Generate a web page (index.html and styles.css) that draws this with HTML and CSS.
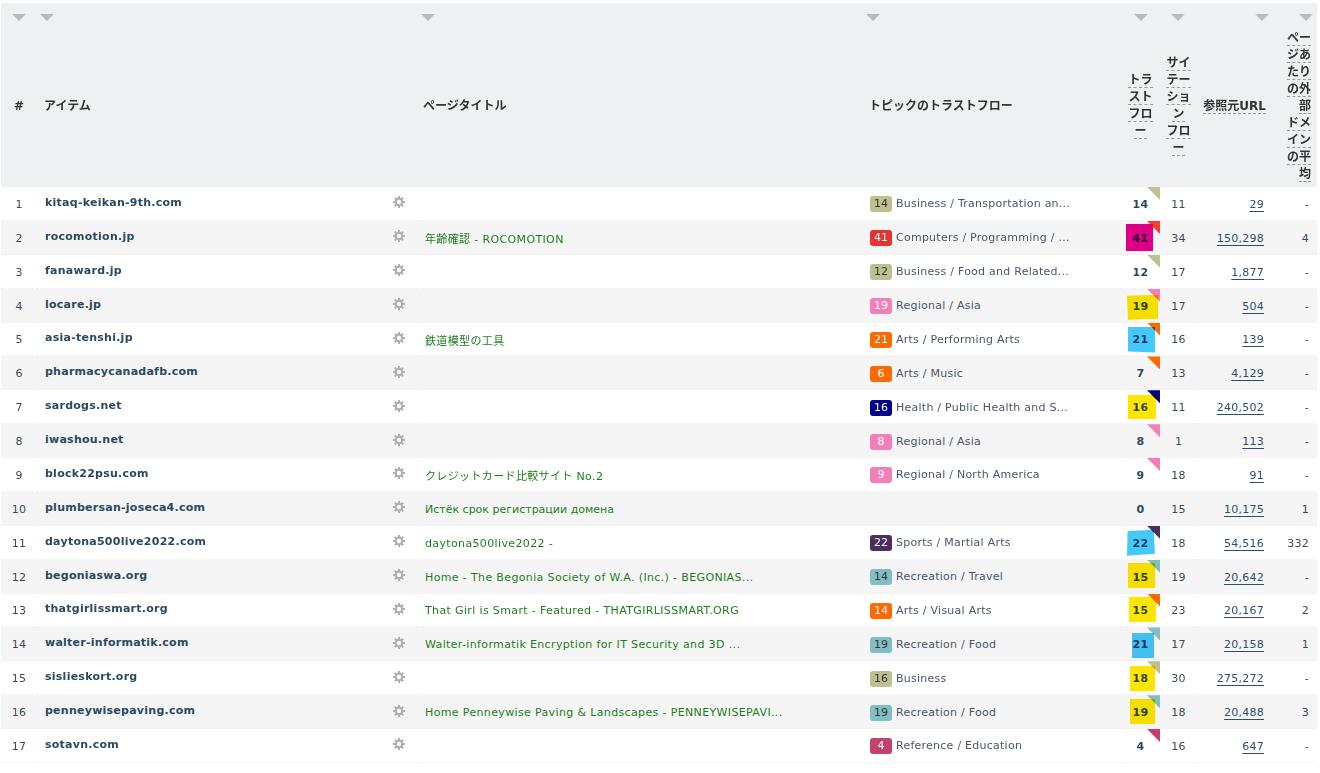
FILE: index.html
```html
<!DOCTYPE html>
<html lang="ja">
<head>
    <meta charset="UTF-8">
    <meta name="viewport" content="width=device-width, initial-scale=1.0">
    <link rel="stylesheet" href="styles.css">
</head>
<body>
    <svg class="defs" width="0" height="0">
        <symbol id="gear" viewBox="0 0 12 12">
            <circle cx="6" cy="6" r="3.3" fill="none" stroke="currentColor" stroke-width="2.2"/>
            <path d="M6 0V3M6 9V12M0 6H3M9 6H12M1.8 1.8L3.6 3.6M8.4 8.4L10.2 10.2M10.2 1.8L8.4 3.6M3.6 8.4L1.8 10.2" stroke="currentColor" stroke-width="2"/>
        </symbol>
    </svg>
    <table class="results">
        <thead>
            <tr>
                <th class="col-num"><i class="sort"></i>#</th>
                <th class="col-item"><i class="sort"></i>アイテム</th>
                <th class="col-title"><i class="sort"></i>ページタイトル</th>
                <th class="col-topic"><i class="sort"></i>トピックのトラストフロー</th>
                <th class="col-tf"><i class="sort"></i><span class="hint">トラ<br>スト<br>フロ<br>ー</span></th>
                <th class="col-cf"><i class="sort"></i><span class="hint">サイ<br>テー<br>ショ<br>ン<br>フロ<br>ー</span></th>
                <th class="col-url"><i class="sort"></i><span class="hint">参照元URL</span></th>
                <th class="col-avg"><i class="sort"></i><span class="hint">ペー<br>ジあ<br>たり<br>の外<br>部<br>ドメ<br>イン<br>の平<br>均</span></th>
            </tr>
        </thead>
        <tbody>
            <tr class="t-business">
                <td class="col-num">1</td>
                <td class="col-item"><div class="item"><a>kitaq-keikan-9th.com</a><svg class="gear"><use href="#gear"/></svg></div></td>
                <td class="col-title"></td>
                <td class="col-topic"><b class="badge">14</b>Business / Transportation an...</td>
                <td class="col-tf"><i class="corner"></i>14</td>
                <td class="col-cf">11</td>
                <td class="col-url"><a>29</a></td>
                <td class="col-avg">-</td>
            </tr>
            <tr class="t-computers">
                <td class="col-num">2</td>
                <td class="col-item"><div class="item"><a>rocomotion.jp</a><svg class="gear"><use href="#gear"/></svg></div></td>
                <td class="col-title">年齢確認 - ROCOMOTION</td>
                <td class="col-topic"><b class="badge">41</b>Computers / Programming / ...</td>
                <td class="col-tf"><i class="corner"></i>41<i class="box pink r2"></i></td>
                <td class="col-cf">34</td>
                <td class="col-url"><a>150,298</a></td>
                <td class="col-avg">4</td>
            </tr>
            <tr class="t-business">
                <td class="col-num">3</td>
                <td class="col-item"><div class="item"><a>fanaward.jp</a><svg class="gear"><use href="#gear"/></svg></div></td>
                <td class="col-title"></td>
                <td class="col-topic"><b class="badge">12</b>Business / Food and Related...</td>
                <td class="col-tf"><i class="corner"></i>12</td>
                <td class="col-cf">17</td>
                <td class="col-url"><a>1,877</a></td>
                <td class="col-avg">-</td>
            </tr>
            <tr class="t-regional">
                <td class="col-num">4</td>
                <td class="col-item"><div class="item"><a>locare.jp</a><svg class="gear"><use href="#gear"/></svg></div></td>
                <td class="col-title"></td>
                <td class="col-topic"><b class="badge">19</b>Regional / Asia</td>
                <td class="col-tf"><i class="corner"></i>19<i class="box yellow r4"></i></td>
                <td class="col-cf">17</td>
                <td class="col-url"><a>504</a></td>
                <td class="col-avg">-</td>
            </tr>
            <tr class="t-arts">
                <td class="col-num">5</td>
                <td class="col-item"><div class="item"><a>asia-tenshi.jp</a><svg class="gear"><use href="#gear"/></svg></div></td>
                <td class="col-title">鉄道模型の工具</td>
                <td class="col-topic"><b class="badge">21</b>Arts / Performing Arts</td>
                <td class="col-tf"><i class="corner"></i>21<i class="box blue r5"></i></td>
                <td class="col-cf">16</td>
                <td class="col-url"><a>139</a></td>
                <td class="col-avg">-</td>
            </tr>
            <tr class="t-arts">
                <td class="col-num">6</td>
                <td class="col-item"><div class="item"><a>pharmacycanadafb.com</a><svg class="gear"><use href="#gear"/></svg></div></td>
                <td class="col-title"></td>
                <td class="col-topic"><b class="badge">6</b>Arts / Music</td>
                <td class="col-tf"><i class="corner"></i>7</td>
                <td class="col-cf">13</td>
                <td class="col-url"><a>4,129</a></td>
                <td class="col-avg">-</td>
            </tr>
            <tr class="t-health">
                <td class="col-num">7</td>
                <td class="col-item"><div class="item"><a>sardogs.net</a><svg class="gear"><use href="#gear"/></svg></div></td>
                <td class="col-title"></td>
                <td class="col-topic"><b class="badge">16</b>Health / Public Health and S...</td>
                <td class="col-tf"><i class="corner"></i>16<i class="box yellow r7"></i></td>
                <td class="col-cf">11</td>
                <td class="col-url"><a>240,502</a></td>
                <td class="col-avg">-</td>
            </tr>
            <tr class="t-regional">
                <td class="col-num">8</td>
                <td class="col-item"><div class="item"><a>iwashou.net</a><svg class="gear"><use href="#gear"/></svg></div></td>
                <td class="col-title"></td>
                <td class="col-topic"><b class="badge">8</b>Regional / Asia</td>
                <td class="col-tf"><i class="corner"></i>8</td>
                <td class="col-cf">1</td>
                <td class="col-url"><a>113</a></td>
                <td class="col-avg">-</td>
            </tr>
            <tr class="t-regional">
                <td class="col-num">9</td>
                <td class="col-item"><div class="item"><a>block22psu.com</a><svg class="gear"><use href="#gear"/></svg></div></td>
                <td class="col-title">クレジットカード比較サイト No.2</td>
                <td class="col-topic"><b class="badge">9</b>Regional / North America</td>
                <td class="col-tf"><i class="corner"></i>9</td>
                <td class="col-cf">18</td>
                <td class="col-url"><a>91</a></td>
                <td class="col-avg">-</td>
            </tr>
            <tr>
                <td class="col-num">10</td>
                <td class="col-item"><div class="item"><a>plumbersan-joseca4.com</a><svg class="gear"><use href="#gear"/></svg></div></td>
                <td class="col-title cyrillic">Истёк срок регистрации домена</td>
                <td class="col-topic"></td>
                <td class="col-tf">0</td>
                <td class="col-cf">15</td>
                <td class="col-url"><a>10,175</a></td>
                <td class="col-avg">1</td>
            </tr>
            <tr class="t-sports">
                <td class="col-num">11</td>
                <td class="col-item"><div class="item"><a>daytona500live2022.com</a><svg class="gear"><use href="#gear"/></svg></div></td>
                <td class="col-title">daytona500live2022 -</td>
                <td class="col-topic"><b class="badge">22</b>Sports / Martial Arts</td>
                <td class="col-tf"><i class="corner"></i>22<i class="box blue r11"></i></td>
                <td class="col-cf">18</td>
                <td class="col-url"><a>54,516</a></td>
                <td class="col-avg">332</td>
            </tr>
            <tr class="t-recreation">
                <td class="col-num">12</td>
                <td class="col-item"><div class="item"><a>begoniaswa.org</a><svg class="gear"><use href="#gear"/></svg></div></td>
                <td class="col-title">Home - The Begonia Society of W.A. (Inc.) - BEGONIAS...</td>
                <td class="col-topic"><b class="badge">14</b>Recreation / Travel</td>
                <td class="col-tf"><i class="corner"></i>15<i class="box yellow r12"></i></td>
                <td class="col-cf">19</td>
                <td class="col-url"><a>20,642</a></td>
                <td class="col-avg">-</td>
            </tr>
            <tr class="t-arts">
                <td class="col-num">13</td>
                <td class="col-item"><div class="item"><a>thatgirlissmart.org</a><svg class="gear"><use href="#gear"/></svg></div></td>
                <td class="col-title">That Girl is Smart - Featured - THATGIRLISSMART.ORG</td>
                <td class="col-topic"><b class="badge">14</b>Arts / Visual Arts</td>
                <td class="col-tf"><i class="corner"></i>15<i class="box yellow r13"></i></td>
                <td class="col-cf">23</td>
                <td class="col-url"><a>20,167</a></td>
                <td class="col-avg">2</td>
            </tr>
            <tr class="t-recreation">
                <td class="col-num">14</td>
                <td class="col-item"><div class="item"><a>walter-informatik.com</a><svg class="gear"><use href="#gear"/></svg></div></td>
                <td class="col-title">Walter-informatik Encryption for IT Security and 3D ...</td>
                <td class="col-topic"><b class="badge">19</b>Recreation / Food</td>
                <td class="col-tf"><i class="corner"></i>21<i class="box blue r14"></i></td>
                <td class="col-cf">17</td>
                <td class="col-url"><a>20,158</a></td>
                <td class="col-avg">1</td>
            </tr>
            <tr class="t-business">
                <td class="col-num">15</td>
                <td class="col-item"><div class="item"><a>sislieskort.org</a><svg class="gear"><use href="#gear"/></svg></div></td>
                <td class="col-title"></td>
                <td class="col-topic"><b class="badge">16</b>Business</td>
                <td class="col-tf"><i class="corner"></i>18<i class="box yellow r15"></i></td>
                <td class="col-cf">30</td>
                <td class="col-url"><a>275,272</a></td>
                <td class="col-avg">-</td>
            </tr>
            <tr class="t-recreation">
                <td class="col-num">16</td>
                <td class="col-item"><div class="item"><a>penneywisepaving.com</a><svg class="gear"><use href="#gear"/></svg></div></td>
                <td class="col-title">Home Penneywise Paving &amp; Landscapes - PENNEYWISEPAVI...</td>
                <td class="col-topic"><b class="badge">19</b>Recreation / Food</td>
                <td class="col-tf"><i class="corner"></i>19<i class="box yellow r16"></i></td>
                <td class="col-cf">18</td>
                <td class="col-url"><a>20,488</a></td>
                <td class="col-avg">3</td>
            </tr>
            <tr class="t-reference">
                <td class="col-num">17</td>
                <td class="col-item"><div class="item"><a>sotavn.com</a><svg class="gear"><use href="#gear"/></svg></div></td>
                <td class="col-title"></td>
                <td class="col-topic"><b class="badge">4</b>Reference / Education</td>
                <td class="col-tf"><i class="corner"></i>4</td>
                <td class="col-cf">16</td>
                <td class="col-url"><a>647</a></td>
                <td class="col-avg">-</td>
            </tr>
        </tbody>
    </table>
</body>
</html>
```

FILE: styles.css
```css
body {
    margin: 0;
    padding: 3px 0 0 1px;
    background: #fff;
    font-family: "DejaVu Sans", "Noto Sans CJK JP", sans-serif;
    font-size: 11px;
    letter-spacing: 0.25px;
    color: #333;
}
.defs {
    position: absolute;
}

.results {
    width: 1316px;
    table-layout: fixed;
    border-collapse: separate;
    border-spacing: 0;
}
.results th,
.results td {
    position: relative;
    box-sizing: border-box;
    padding: 0;
}

/* column widths */
.col-num { width: 36px; text-align: center; }
.col-item { width: 380px; }
.col-title { width: 445px; }
.col-topic { width: 259px; }
.col-tf { width: 39px; text-align: center; }
.col-cf { width: 37px; text-align: center; }
.col-url { width: 73px; text-align: right; }
.col-avg { width: 47px; text-align: right; }

/* header */
.results th {
    height: 184px;
    padding-top: 22px;
    background: #eff0f2;
    font-size: 12px;
    font-weight: bold;
    letter-spacing: 0;
    line-height: 17px;
    color: #333;
    text-align: left;
}
.results th:first-child { border-radius: 3px 0 0 3px; }
.results th.col-num { text-align: center; }
.results th.col-item { padding-left: 7px; }
.results th.col-title { padding-left: 6px; }
.results th.col-topic { padding-left: 7px; }
.results th.col-tf,
.results th.col-cf { text-align: center; }
.results th.col-url { text-align: right; padding-right: 4px; }
.results th.col-avg { text-align: right; padding-right: 6px; }

.hint {
    border-bottom: 1px dashed #999;
}
.sort {
    position: absolute;
    top: 11px;
    width: 14px;
    height: 7px;
    background: #bbb;
    clip-path: polygon(0 0, 100% 0, 50% 100%);
}
th.col-num .sort { left: 11px; }
th.col-item .sort { left: 3px; }
th.col-title .sort { left: 4px; }
th.col-topic .sort { left: 4px; }
th.col-tf .sort { left: 13px; }
th.col-cf .sort { left: 11px; }
th.col-url .sort { left: 58px; }
th.col-avg .sort { left: 29px; }

/* rows */
.results td {
    height: 33.88px;
    padding-top: 2px;
    border-bottom: 1px dotted #eee;
    color: #3d4a55;
}
tbody tr:nth-child(even) td {
    background: #f5f5f5;
}
td.col-url { padding-right: 6px; }
td.col-avg { padding-right: 8px; }
td.col-url a {
    color: #2d4f6c;
    text-decoration: underline;
    text-underline-offset: 3px;
}

.item {
    display: flex;
    align-items: center;
    justify-content: space-between;
    padding: 0 12px 4px 8px;
}
.item a {
    font-weight: bold;
    color: #2a4a62;
}
.gear {
    width: 12px;
    height: 12px;
    color: #b0b0b0;
}

td.col-title {
    padding-left: 8px;
    color: #1b7f1b;
    letter-spacing: 0.36px;
    white-space: nowrap;
}
td.cyrillic {
    letter-spacing: 0;
}
td.col-topic {
    padding-left: 8px;
    color: #46586a;
    white-space: nowrap;
}
td.col-tf {
    font-weight: bold;
    color: #2a4a62;
}

/* topic colours */
.t-business { --topic: #bfc08f; --topic-text: #333; }
.t-computers { --topic: #e53232; --topic-text: #fff; }
.t-regional { --topic: #f47fb8; --topic-text: #fff; }
.t-arts { --topic: #ff6a00; --topic-text: #fff; }
.t-health { --topic: #00008b; --topic-text: #fff; }
.t-sports { --topic: #4a2f5f; --topic-text: #fff; }
.t-recreation { --topic: #82bfc2; --topic-text: #333; }
.t-reference { --topic: #c2416f; --topic-text: #fff; }

.badge {
    display: inline-block;
    width: 22px;
    height: 16px;
    margin-right: 4px;
    border-radius: 3px;
    background: var(--topic);
    color: var(--topic-text);
    font-weight: normal;
    letter-spacing: 0;
    line-height: 16px;
    text-align: center;
}
.corner {
    position: absolute;
    top: 0;
    right: 0;
    width: 13px;
    height: 13px;
    background: var(--topic);
    clip-path: polygon(0 0, 100% 0, 100% 100%);
}
.t-computers .corner {
    background: #ff3b30;
}

/* highlighter marks, laid over the number */
.box {
    position: absolute;
    mix-blend-mode: multiply;
}
.yellow { background: #ffe600; }
.blue { background: #45c8fa; }
.pink { background: #e6008c; }
.r2 { left: 5px; top: 3px; width: 27px; height: 27px; }
.r4 { left: 6px; top: 6px; width: 31px; height: 25px; clip-path: polygon(0 4%, 100% 0, 100% 96%, 3% 100%); }
.r5 { left: 7px; top: 4px; width: 27px; height: 26px; clip-path: polygon(0 0, 100% 2%, 100% 100%, 0 96%); }
.r7 { left: 7px; top: 5px; width: 28px; height: 24px; }
.r11 { left: 6px; top: 4px; width: 28px; height: 26px; clip-path: polygon(2% 5%, 95% 0, 100% 92%, 0 100%); }
.r12 { left: 7px; top: 3px; width: 27px; height: 25px; }
.r13 { left: 8px; top: 3px; width: 27px; height: 25px; }
.r14 { left: 11px; top: 6px; width: 22px; height: 25px; }
.r15 { left: 9px; top: 5px; width: 25px; height: 25px; }
.r16 { left: 9px; top: 4px; width: 25px; height: 25px; }
```
